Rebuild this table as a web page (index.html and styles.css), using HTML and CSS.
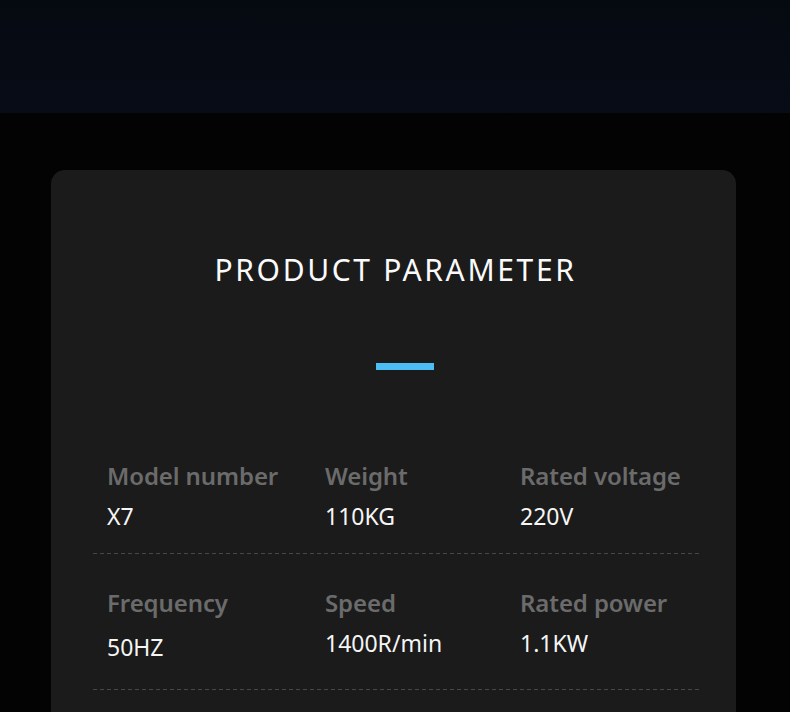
FILE: index.html
```html
<!DOCTYPE html>
<html lang="en">
<head>
<meta charset="utf-8">
<title>Product Parameter</title>
<link rel="stylesheet" href="styles.css">
</head>
<body>
  <header class="banner"></header>
  <main class="section">
    <div class="card">
      <h2 class="title">PRODUCT PARAMETER</h2>
      <div class="accent"></div>
      <div class="params">
        <div class="row">
          <div class="cell"><div class="label">Model number</div><div class="value">X7</div></div>
          <div class="cell"><div class="label">Weight</div><div class="value">110KG</div></div>
          <div class="cell"><div class="label">Rated voltage</div><div class="value">220V</div></div>
        </div>
        <div class="row">
          <div class="cell"><div class="label">Frequency</div><div class="value low">50HZ</div></div>
          <div class="cell"><div class="label">Speed</div><div class="value">1400R/min</div></div>
          <div class="cell"><div class="label">Rated power</div><div class="value">1.1KW</div></div>
        </div>
      </div>
    </div>
  </main>
</body>
</html>
```

FILE: styles.css
```css
* { box-sizing: border-box; }
html, body { margin: 0; padding: 0; }
body {
  background: #030303;
  font-family: "Noto Sans", "Open Sans", sans-serif;
  color: #fff;
  overflow: hidden;
}
.banner {
  height: 113px;
  background: linear-gradient(180deg, #050910 0%, #070b14 60%, #080c16 100%);
}
.section {
  padding: 57px 54px 0 51px;
}
.card {
  background: #1b1b1b;
  border-radius: 14px;
  padding: 80px 34px 60px 42px;
  min-height: 700px;
}
.title {
  margin: 0;
  text-align: center;
  font-weight: 400;
  font-size: 30px;
  line-height: 40px;
  letter-spacing: 2.65px;
  padding-right: 4px;
  color: #fafafa;
}
.accent {
  width: 58px;
  height: 7px;
  background: #4dbef5;
  margin: 73px 0 0 283px;
}
.params {
  margin-top: 98px;
}
.row {
  display: grid;
  grid-template-columns: 218px 195px 1fr;
  padding: 0 0 0 14px;
  background-image: repeating-linear-gradient(90deg, #474747 0 4px, transparent 4px 7px);
  background-size: 100% 1px;
  background-repeat: no-repeat;
  background-position: left bottom;
}
.row:first-child {
  height: 93px;
  margin-top: -7px;
}
.row + .row {
  height: 136px;
  padding-top: 34px;
}
.label {
  font-size: 24px;
  font-weight: 600;
  color: #6b6b6b;
  line-height: 30px;
  letter-spacing: -0.1px;
}
.value {
  font-size: 23px;
  line-height: 28px;
  margin-top: 11px;
  color: #f5f5f5;
}
.row + .row .value { margin-top: 11px; }
.row + .row .value.low { margin-top: 15px; }
```
